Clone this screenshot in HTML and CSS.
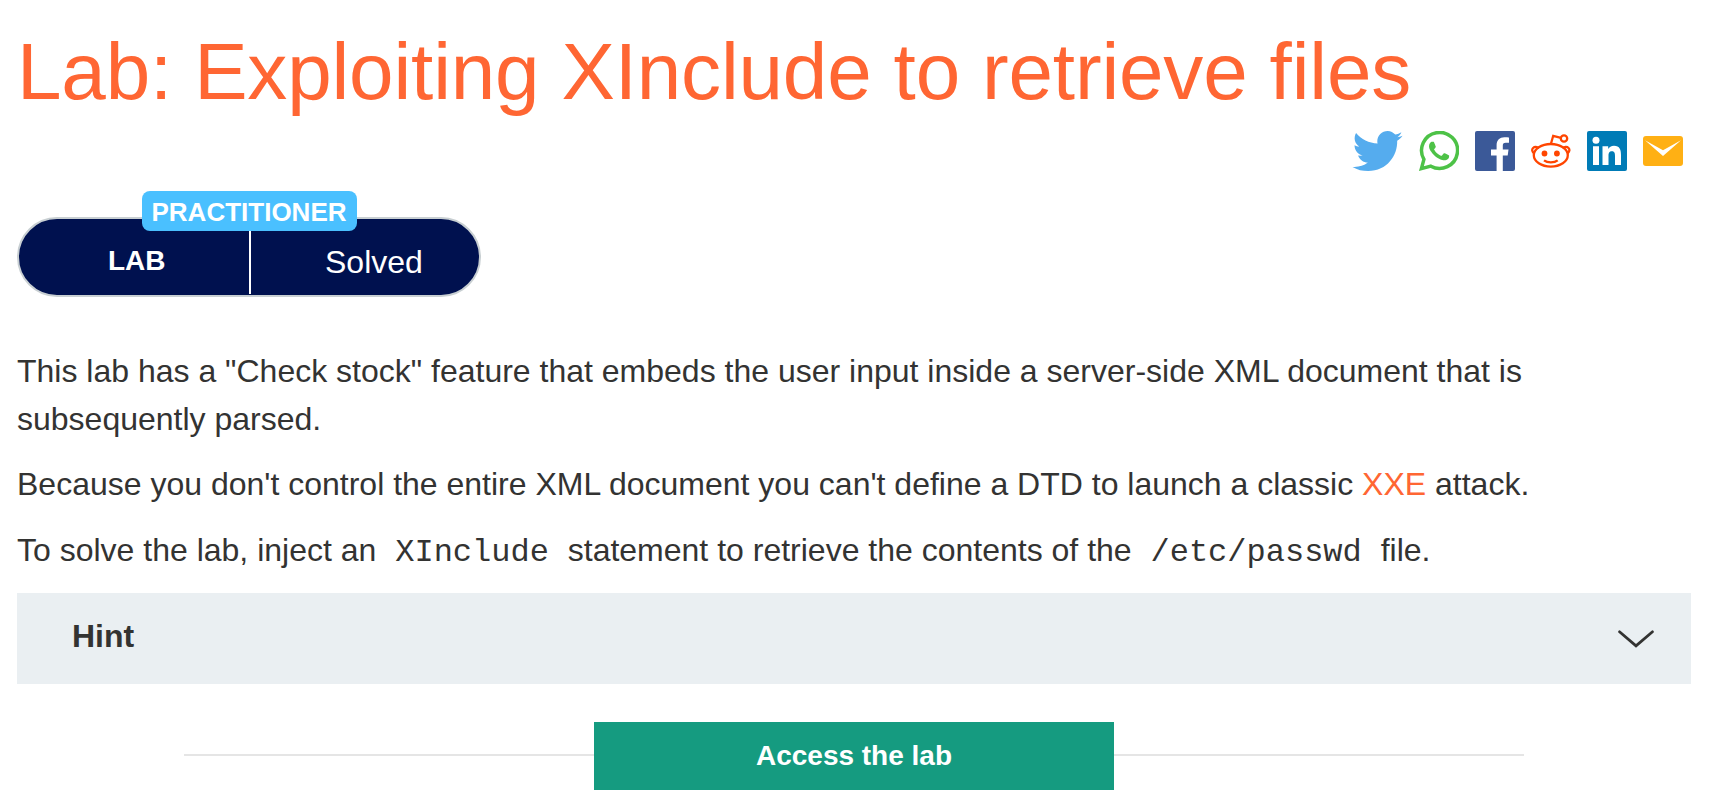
FILE: index.html
```html
<!DOCTYPE html>
<html lang="en">
<head>
<meta charset="utf-8">
<title>Lab: Exploiting XInclude to retrieve files</title>
<link rel="stylesheet" href="styles.css">
</head>
<body>
<main class="page">
  <h1 class="title">Lab: Exploiting XInclude to retrieve files</h1>

  <nav class="share">
    <a class="share-link" aria-label="Twitter"><svg width="51" height="40" viewBox="0 0 50 40" preserveAspectRatio="none"><path fill="#55acee" d="M49.5 4.700c-1.800.8-3.400 1.300-5 1.500 1.700-1.100 3.200-2.800 3.900-4.900-1.700 1-4 2-6 2.300C40.500 1.500 38 0 35 0c-5.700 0-10.200 4.600-10.200 10.200 0 .8.100 1.600.3 2.300C16.600 12 9 8 4 1.900 1.300 6.500 2.600 12.500 7.100 15.500c-1.600 0-3.200-.5-4.600-1.300v.2c0 4.900 3.500 9 8.100 9.900-1.500.4-3.100.4-4.600.2 1.300 4.100 5.100 7 9.500 7.100C11.500 34.800 6.500 36.300.500 35.900 5.200 38.800 10.300 40 15.800 40c18.800 0 29-15.600 28.500-30.200 2-1.400 3.900-3.100 5.200-5.100z"/></svg></a>
    <a class="share-link" aria-label="WhatsApp"><svg width="40" height="40" viewBox="0 0 24 24"><path fill="#4dc247" d="M17.472 14.382c-.297-.149-1.758-.867-2.030-.967-.273-.099-.471-.148-.670.150-.197.297-.767.966-.940 1.164-.173.199-.347.223-.644.075-.297-.150-1.255-.463-2.390-1.475-.883-.788-1.480-1.761-1.653-2.059-.173-.297-.018-.458.130-.606.134-.133.298-.347.446-.520.149-.174.198-.298.298-.497.099-.198.050-.371-.025-.520-.075-.149-.669-1.612-.916-2.207-.242-.579-.487-.500-.669-.510-.173-.008-.371-.010-.570-.010-.198 0-.520.074-.792.372-.272.297-1.040 1.016-1.040 2.479 0 1.462 1.065 2.875 1.213 3.074.149.198 2.096 3.200 5.077 4.487.709.306 1.262.489 1.694.625.712.227 1.360.195 1.871.118.571-.085 1.758-.719 2.006-1.413.248-.694.248-1.289.173-1.413-.074-.124-.272-.198-.570-.347z"/><path fill="none" stroke="#4dc247" stroke-width="2.1" d="M1.450 22.550 2.950 17A10.800 10.800 0 1 1 7.100 21.100z"/></svg></a>
    <a class="share-link" aria-label="Facebook"><svg width="40" height="40" viewBox="0 0 40 40"><rect width="40" height="40" rx="2" fill="#3b5998"/><path fill="#fff" d="M21.600 40V24.500H16v-5.900h5.600v-4.400c0-5.200 3.200-8 7.800-8 2.200 0 4 .1 4.600.3v5.300h-3.200c-2.500 0-3 1.300-3 3v3.800h5.700l-.8 5.900h-4.900V40z"/></svg></a>
    <a class="share-link" aria-label="Reddit"><svg width="40" height="40" viewBox="0 0 40 40" fill="none" stroke="#ff4500" stroke-width="2.300"><ellipse cx="19.800" cy="24.300" rx="17" ry="11.300"/><path d="M3.500 22.500C1 21 .6 18.500 2.100 17s4-1.500 5.700.5M36.100 22.500c2.500-1.500 2.900-4 1.400-5.500s-4-1.500-5.700.5M19.900 13l2.300-8.200L30 6.800"/><circle cx="33" cy="7.500" r="3.200"/><path d="M13 29.300c3.500 2.700 10.200 2.700 13.700 0"/><circle cx="13.500" cy="22.500" r="2.900" fill="#ff4500" stroke="none"/><circle cx="25.900" cy="22.500" r="2.900" fill="#ff4500" stroke="none"/></svg></a>
    <a class="share-link" aria-label="LinkedIn"><svg width="40" height="40" viewBox="0 0 40 40"><rect width="40" height="40" rx="2" fill="#007bb6"/><g fill="#fff"><circle cx="9" cy="9.300" r="3.500"/><path d="M6 15.200h6V34H6zM15.500 15.200h5.700V18c1-1.700 3-3.200 5.800-3.200 5.800 0 7 4 7 9.100V34h-6v-9.100c0-2.200-.2-4.700-3-4.700s-3.500 2-3.500 4.600V34h-6z"/></g></svg></a>
    <a class="share-link" aria-label="Email"><svg width="40" height="40" viewBox="0 0 40 40"><rect y="5" width="40" height="30" rx="3" fill="#ffb014"/><path fill="#fff" d="M2 9.300 20 19.300l18-10L20 25z"/></svg></a>
  </nav>

  <div class="status">
    <span class="status-kind">LAB</span>
    <span class="status-state">Solved</span>
    <span class="status-level">PRACTITIONER</span>
  </div>

  <section class="description">
    <p class="text">This lab has a "Check stock" feature that embeds the user input inside a server-side XML document that is subsequently parsed.</p>
    <p class="text">Because you don't control the entire XML document you can't define a DTD to launch a classic <a class="text-link">XXE</a> attack.</p>
    <p class="text">To solve the lab, inject an <code class="code">XInclude</code> statement to retrieve the contents of the <code class="code">/etc/passwd</code> file.</p>
  </section>

  <div class="hint">
    <span class="hint-label">Hint</span>
    <svg class="hint-arrow" width="38" height="20" viewBox="0 0 38 20"><path d="M2.500 2.800 19 16.800l16.500-14" fill="none" stroke="#333332" stroke-width="2.800" stroke-linecap="round"/></svg>
  </div>

  <div class="launch">
    <a class="launch-button">Access the lab</a>
  </div>
</main>
</body>
</html>
```

FILE: styles.css
```css
* { box-sizing: border-box; }

body {
  margin: 0;
  background: #fff;
  color: #333332;
  font-family: "Liberation Sans", Arial, sans-serif;
  font-size: 32px;
  line-height: 48px;
}

.page {
  width: 1712px;
  height: 798px;
  padding: 27px 21px 0 17px;
  overflow: hidden;
}

.title {
  margin: 0;
  color: #ff6633;
  font-size: 80px;
  font-weight: 400;
  letter-spacing: -0.16px;
  line-height: 90px;
  white-space: nowrap;
}

.share {
  display: flex;
  justify-content: flex-end;
  gap: 16px;
  height: 40px;
  margin-top: 14px;
  padding-right: 8px;
}

.share-link { display: block; height: 40px; }
.share-link svg { display: block; }

.status {
  position: relative;
  display: flex;
  width: 464px;
  height: 80px;
  margin-top: 46px;
  border: 2px solid #c8cfd2;
  border-radius: 40px;
  background: #00114f;
  color: #fff;
}

.status-kind {
  width: 232px;
  height: 75px;
  padding: 18px 0 0 89px;
  border-right: 2px solid #fff;
  font-size: 28px;
  font-weight: 700;
}

.status-state { padding: 19px 0 0 74px; }

.status-level {
  position: absolute;
  left: 123px;
  top: -28px;
  width: 215px;
  height: 40px;
  padding-right: 1px;
  border-radius: 8px;
  background: #4ac0ff;
  font-size: 26px;
  font-weight: 700;
  line-height: 42px;
  text-align: center;
}

.description { margin-top: 50px; }

.text {
  width: 1600px;
  margin: 0 0 17px;
}

.text:last-child { margin: 18px 0; }

.text-link { color: #ff6633; }

.code {
  padding: 0 10px;
  font-family: "Liberation Mono", monospace;
  font-size: 32px;
  line-height: 1;
}

.hint {
  display: flex;
  align-items: center;
  justify-content: space-between;
  height: 91px;
  margin-top: 19px;
  padding: 0 36px 0 55px;
  background: #eaeff2;
}

.hint-label {
  padding-bottom: 5px;
  font-weight: 700;
}

.launch {
  display: flex;
  align-items: center;
  height: 68px;
  margin: 38px 167px 0;
}

.launch::before,
.launch::after {
  content: "";
  flex: 1;
  height: 2px;
  margin-bottom: 2px;
  background: #e5e5e5;
}

.launch-button {
  width: 520px;
  height: 68px;
  background: #159b80;
  color: #fff;
  font-size: 28px;
  font-weight: 700;
  line-height: 67px;
  text-align: center;
}
```
